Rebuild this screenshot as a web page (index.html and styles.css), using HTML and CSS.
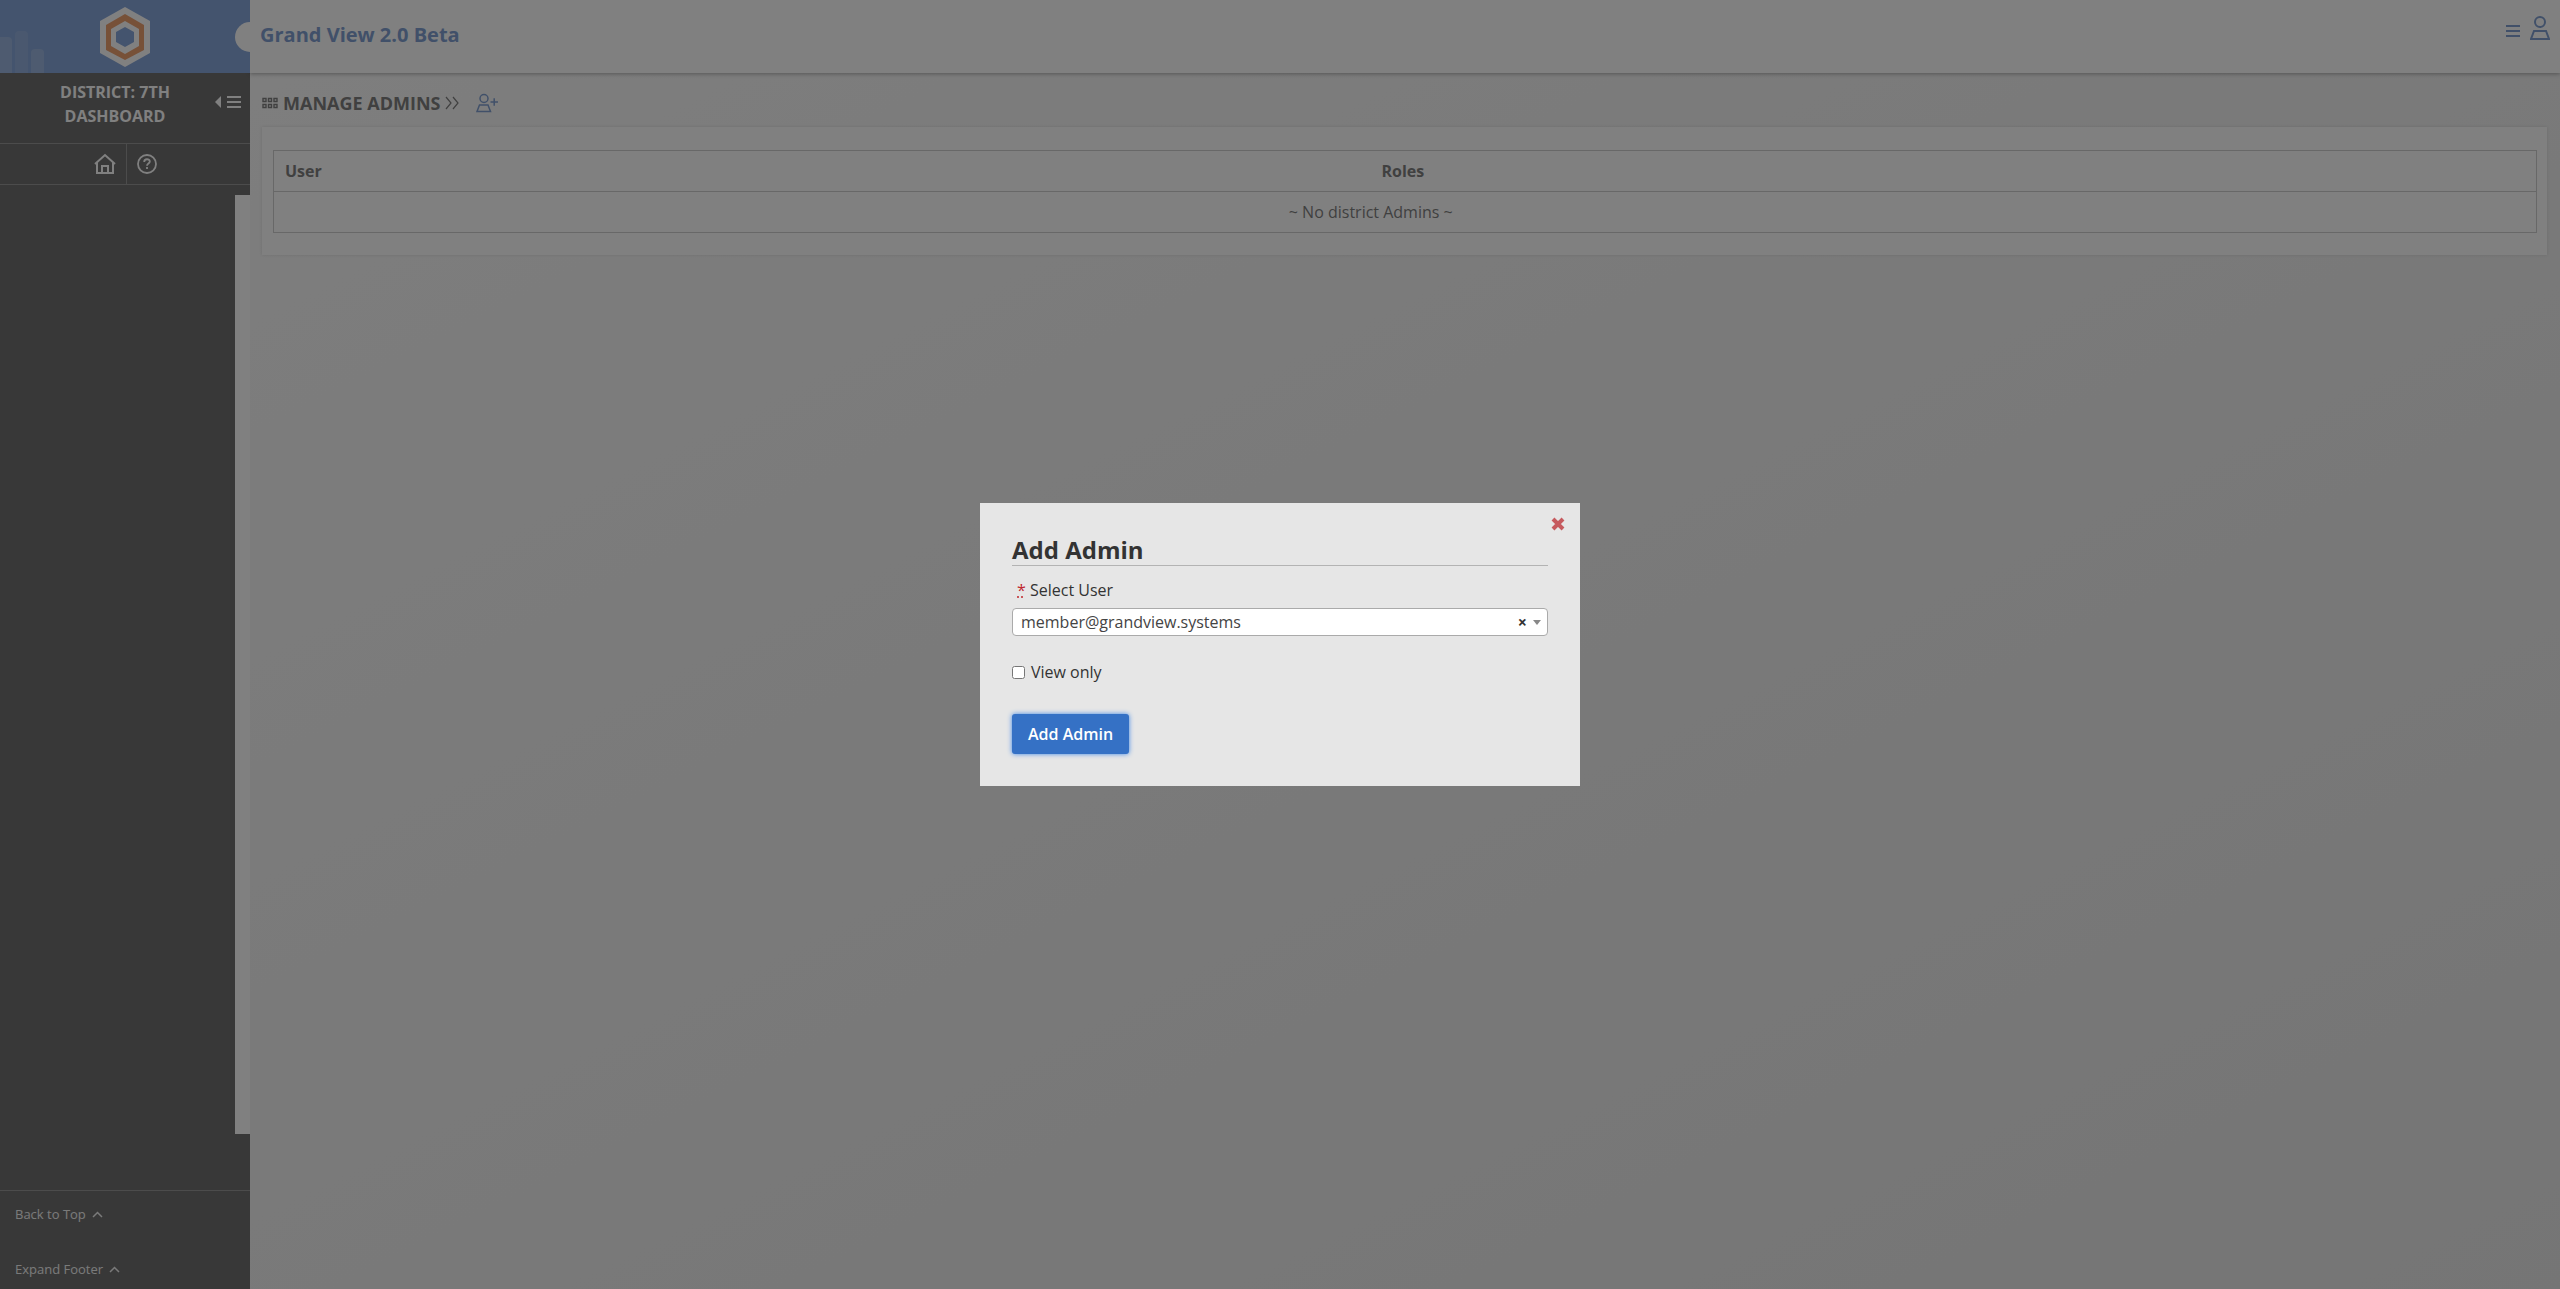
FILE: index.html
```html
<!DOCTYPE html>
<html lang="en">
<head>
  <meta charset="UTF-8" />
  <meta name="viewport" content="width=device-width, initial-scale=1" />
  <title>Grand View 2.0 Beta - Manage Admins</title>
  <link rel="stylesheet" href="styles.css">
</head>
<body>
  <div class="layout">
    <aside class="sidebar">
      <div class="brand">
        <svg class="brand-bars" width="44" height="42" viewBox="0 0 44 42">
          <path d="M0 42V6h8a4 4 0 0 1 4 4v32z" />
          <path d="M15 42V4a4 4 0 0 1 4-4h5a4 4 0 0 1 4 4v38z" opacity=".6" />
          <path d="M31 42V22a4 4 0 0 1 4-4h5a4 4 0 0 1 4 4v20z" />
        </svg>
        <a class="logo" href="#" aria-label="Grand View">
          <svg width="50" height="60" viewBox="0 0 50 60">
            <path fill="#fff" d="M25 0l25 14v32L25 60 0 46V14z" />
            <path fill="#e8894c" d="M25 7l19 11v25L25 53 6 43V18z" />
            <path fill="#fff" d="M25 14l14 8v17l-14 8-14-8V22z" />
            <path fill="#6991d2" d="M25 20l9 5v10l-9 5-9-5V25z" />
          </svg>
        </a>
        <span class="brand-notch"></span>
      </div>
      <div class="dashboard">
        <a class="dashboard-link" href="#">DISTRICT: 7TH DASHBOARD</a>
        <button type="button" class="icon-btn collapse" aria-label="Collapse menu">
          <svg width="28" height="12" viewBox="0 0 28 12">
            <path fill="currentColor" d="M7 0v12L1 6z" />
            <path stroke="currentColor" stroke-width="2" d="M13 1h14M13 6h14M13 11h14" />
          </svg>
        </button>
      </div>
      <nav class="shortcuts">
        <a href="#" aria-label="Home">
          <svg width="22" height="22" viewBox="0 0 22 22" fill="none" stroke="currentColor" stroke-width="2">
            <path d="M1 11L11 2l10 9M3 9.500V20h16V9.500M8 20v-7h6v7" />
          </svg>
        </a>
        <a href="#" aria-label="Help">
          <svg width="20" height="22" viewBox="1 0 20 22" fill="none" stroke="currentColor" stroke-width="1.800">
            <circle cx="11" cy="11" r="9" />
            <path d="M8.200 9c0-3.600 5.600-3.600 5.600-.4 0 2-2.800 1.900-2.800 4.100M11 14v2" />
          </svg>
        </a>
      </nav>
      <div class="menu"></div>
      <div class="sidebar-footer">
        <a href="#">Back to Top
          <svg width="11" height="7" viewBox="0 0 11 7"><path d="M1 6l4.500-4.500L10 6" /></svg>
        </a>
        <a href="#">Expand Footer
          <svg width="11" height="7" viewBox="0 0 11 7"><path d="M1 6l4.500-4.500L10 6" /></svg>
        </a>
      </div>
    </aside>

    <div class="content">
      <header class="topbar">
        <a class="site-name" href="#">Grand View 2.0 Beta</a>
        <div class="topbar-actions">
          <button type="button" class="icon-btn menu-btn" aria-label="Menu">
            <svg width="14" height="14" viewBox="0 0 14 14"><path stroke="currentColor" stroke-width="2" d="M0 2h14M0 7h14M0 12h14" /></svg>
          </button>
          <button type="button" class="icon-btn" aria-label="Account">
            <svg width="20" height="24" viewBox="0 0 20 24" fill="none" stroke="currentColor" stroke-width="2">
              <circle cx="10" cy="6" r="5" />
              <path d="M4 15h12l3 8H1z" />
            </svg>
          </button>
        </div>
      </header>

      <main>
        <div class="page-title">
          <svg width="16" height="12" viewBox="0 0 16 12" fill="none" stroke="currentColor" stroke-width="1.400">
            <path d="M1 1.500h3v3H1zM6.500 1.500h3v3h-3zM12 1.500h3v3h-3zM1 7.500h3v3H1zM6.500 7.500h3v3h-3zM12 7.500h3v3h-3z" />
          </svg>
          <h1>MANAGE ADMINS</h1>
          <svg width="14" height="14" viewBox="0 0 14 14" fill="none" stroke="currentColor" stroke-width="1.200">
            <path d="M1 1l5 6-5 6M8 1l5 6-5 6" />
          </svg>
          <a class="add-user" href="#" aria-label="Add admin">
            <svg width="22" height="20" viewBox="0 0 22 20" fill="none" stroke="currentColor" stroke-width="1.500">
              <circle cx="8" cy="5.500" r="4" />
              <path d="M3.500 12h8.500l2.500 6.500H1zM14.500 9h7.500M18.200 5.200v7.500" />
            </svg>
          </a>
        </div>

        <section class="panel">
          <table>
            <colgroup>
              <col />
              <col />
              <col class="col-actions" />
            </colgroup>
            <thead>
              <tr><th>User</th><th>Roles</th><th></th></tr>
            </thead>
            <tbody>
              <tr><td colspan="2">~ No district Admins ~</td><td></td></tr>
            </tbody>
          </table>
        </section>
      </main>
    </div>
  </div>

  <div class="overlay">
    <div class="modal" role="dialog" aria-labelledby="modalTitle">
      <button type="button" class="icon-btn modal-close" aria-label="Close">
        <svg width="14" height="14" viewBox="0 0 14 14"><path stroke="currentColor" stroke-width="4" d="M2 2l10 10M12 2L2 12" /></svg>
      </button>
      <h2 id="modalTitle">Add Admin</h2>
      <form>
        <label class="field-label" for="user"><abbr title="required">*</abbr> Select User</label>
        <div class="select-box">
          <select id="user" name="user">
            <option>member@grandview.systems</option>
          </select>
          <button type="button" class="clear" aria-label="Clear">×</button>
          <span class="arrow"></span>
        </div>
        <div class="check">
          <input type="checkbox" id="viewOnly" name="view_only" />
          <label for="viewOnly">View only</label>
        </div>
        <button type="submit" class="submit">Add Admin</button>
      </form>
    </div>
  </div>
</body>
</html>
```

FILE: styles.css
```css
* { box-sizing: border-box; }
body {
  margin: 0;
  font-family: "Open Sans", sans-serif;
  font-size: 16px;
  line-height: 24px;
  color: #606060;
  background: #eee;
}
a {
  color: inherit;
  text-decoration: none;
}
svg { display: block; }
.icon-btn {
  padding: 0;
  border: none;
  background: none;
  color: inherit;
  cursor: pointer;
}
.layout {
  display: flex;
  min-height: 100vh;
  background: linear-gradient(to bottom right, #fbfbfb, #e4e4e4);
}

/* sidebar */
.sidebar {
  display: flex;
  flex-direction: column;
  width: 250px;
  flex-shrink: 0;
  background: #4b4b4b;
  color: #fff;
}
.brand {
  position: relative;
  display: flex;
  justify-content: center;
  align-items: center;
  height: 73px;
  background: #6991d2;
  overflow: hidden;
}
.brand-bars {
  position: absolute;
  left: 0;
  bottom: 0;
  fill: #83a4d6;
}
.brand-notch {
  position: absolute;
  top: 22px;
  right: -15px;
  width: 30px;
  height: 30px;
  border-radius: 50%;
  background: #fff;
}
.dashboard {
  display: flex;
  align-items: flex-start;
  height: 71px;
  padding: 7px 8px 0 50px;
  border-bottom: 1px solid #7d7d7d;
  font-weight: bold;
}
.dashboard-link {
  flex: 1;
  padding-right: 34px;
  text-align: center;
}
.collapse { margin-top: 16px; }
.shortcuts {
  display: flex;
  justify-content: center;
  height: 41px;
  border-bottom: 1px solid #7d7d7d;
}
.shortcuts a {
  display: flex;
  align-items: center;
  padding: 0 10px;
}
.shortcuts a + a { border-left: 1px solid #7d7d7d; }
.menu {
  flex: 1;
  margin: 10px 0 56px;
  border-right: 15px solid #fff;
}
.sidebar-footer {
  display: flex;
  flex-direction: column;
  gap: 31px;
  height: 99px;
  padding: 11px 15px;
  border-top: 1px solid #7d7d7d;
  font-size: 13px;
  color: #f0f0f0;
}
.sidebar-footer a {
  display: flex;
  align-items: center;
  gap: 6px;
}
.sidebar-footer path {
  fill: none;
  stroke: currentColor;
  stroke-width: 1.5;
}

/* page */
.content {
  flex: 1;
  min-width: 0;
}
.topbar {
  display: flex;
  justify-content: space-between;
  height: 73px;
  padding: 0 10px;
  background: #fff;
  box-shadow: 0 1px 4px rgba(0,0,0,0.4);
  color: #6188c6;
}
.site-name {
  margin-top: 23px;
  font-size: 20px;
  font-weight: bold;
}
.topbar-actions {
  display: flex;
  align-items: center;
  gap: 10px;
  height: 56px;
}
.menu-btn { margin-top: 6px; }
main { padding: 18px 13px 18px 12px; }
.page-title {
  display: flex;
  align-items: center;
  gap: 5px;
  height: 24px;
}
.page-title h1 {
  margin: 0;
  font-size: 18px;
}
.add-user {
  margin-left: 12px;
  color: #6188c6;
}
.panel {
  margin-top: 12px;
  padding: 23px 10px 22px 11px;
  background: #fff;
  box-shadow: 0 0 3px rgba(0,0,0,0.15);
}
table {
  width: 100%;
  border: 1px solid #c4c4c4;
  border-collapse: collapse;
  table-layout: fixed;
}
.col-actions { width: 69px; }
th, td {
  height: 41px;
  padding: 8px 11px;
  border-bottom: 1px solid #c4c4c4;
}
th { text-align: left; }
td { text-align: center; }

/* modal */
.overlay {
  position: fixed;
  inset: 0;
  display: flex;
  justify-content: center;
  align-items: center;
  background: rgba(43,43,43,0.6);
}
.modal {
  position: relative;
  width: 600px;
  padding: 32px;
  background: #e6e6e6;
  color: #333;
}
.modal-close {
  position: absolute;
  top: 14px;
  right: 15px;
  color: #c65a5e;
}
.modal h2 {
  margin: 0 0 12px;
  border-bottom: 1px solid #b3b3b3;
  font-size: 24px;
  line-height: 30px;
}
.field-label {
  display: block;
  margin-bottom: 6px;
  padding-left: 5px;
}
abbr {
  color: #c0272d;
  text-decoration: underline dotted;
}
.select-box {
  display: flex;
  align-items: center;
  height: 28px;
  padding: 0 6px 0 8px;
  border: 1px solid #aaa;
  border-radius: 4px;
  background: #fff;
}
.select-box select {
  flex: 1;
  padding: 0;
  border: none;
  background: none;
  appearance: none;
  font: inherit;
  color: #444;
}
.clear {
  padding: 0;
  border: none;
  background: none;
  font: bold 16px "Open Sans", sans-serif;
  color: #333;
  cursor: pointer;
}
.arrow {
  margin-left: 6px;
  border: 4px solid transparent;
  border-top: 5px solid #888;
  border-bottom: none;
}
.check {
  display: flex;
  align-items: center;
  gap: 6px;
  margin: 24px 0 30px;
}
.check input {
  width: 13px;
  height: 13px;
  margin: 0;
}
.submit {
  height: 40px;
  padding: 0 16px;
  border: none;
  border-radius: 3px;
  background: #3571c5;
  box-shadow: 0 0 5px #3d86e8;
  color: #fff;
  font: 600 16px "Open Sans", sans-serif;
  cursor: pointer;
}
```
